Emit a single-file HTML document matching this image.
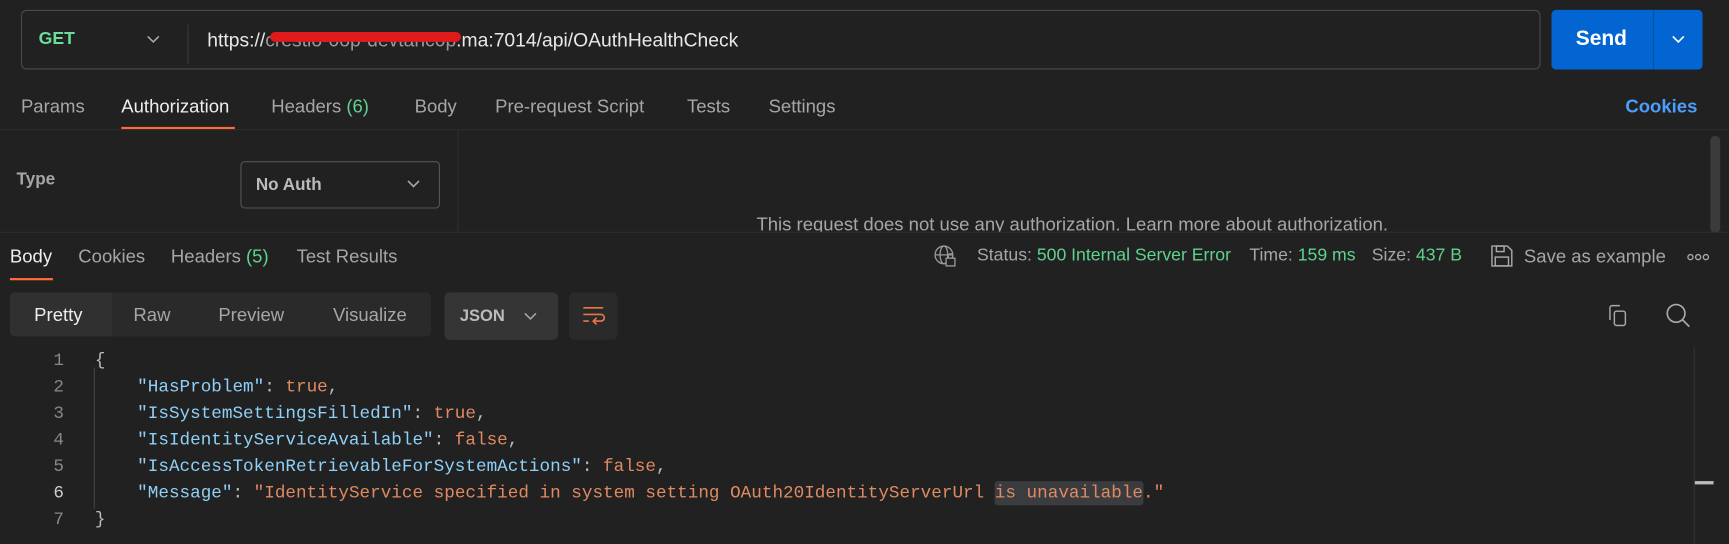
<!DOCTYPE html>
<html><head><meta charset="utf-8"><style>
html,body{margin:0;padding:0;background:#212121;overflow:hidden;width:1729px;height:544px}
#w{position:absolute;left:0;top:0;width:1568px;height:493px;transform:scale(1.1027,1.1034);transform-origin:0 0;font-family:"Liberation Sans",sans-serif;color:#a6a6a6;font-size:16.8px}
.a{position:absolute;white-space:nowrap}
.g{color:#5fd38d}
.code{font-family:"Liberation Mono",monospace;font-size:16px;color:#bbb}
.k{color:#8fd0f8}.v{color:#e08a62}
</style></head><body><div id="w">
<!-- URL bar -->
<div class="a" style="left:19px;top:9px;width:1376px;height:52px;border:1px solid #4a4a4a;border-radius:5px"></div>
<div class="a" style="left:35px;top:27px;color:#6bdd9a;font-weight:bold;font-size:16px">GET</div>
<svg class="a" style="left:132px;top:31px" width="14" height="10"><path d="M2 2l5 5 5-5" stroke="#aaa" stroke-width="1.4" fill="none"/></svg>
<div class="a" style="left:170px;top:22px;width:1px;height:36px;background:#3a3a3a"></div>
<div class="a" style="left:188px;top:26px;color:#e8e8e8;font-size:17.5px">https://<span style="position:relative;color:#9a9a9a">crestio-0op-devtanc0p<span style="position:absolute;left:4px;right:-4px;top:3px;height:9px;background:#e01a1a;border-radius:5px"></span></span>.ma:7014/api/OAuthHealthCheck</div>
<div class="a" style="left:1407px;top:9px;width:137px;height:54px;background:#0265d2;border-radius:4px"></div>
<div class="a" style="left:1499px;top:9px;width:1px;height:54px;background:#0a4f9e"></div>
<div class="a" style="left:1429px;top:25px;color:#fff;font-weight:bold;font-size:19px">Send</div>
<svg class="a" style="left:1515px;top:31px" width="14" height="10"><path d="M2 2l5 5 5-5" stroke="#fff" stroke-width="1.5" fill="none"/></svg>
<!-- tabs -->
<div class="a" style="left:19px;top:87px">Params</div>
<div class="a" style="left:110px;top:87px;color:#eee">Authorization</div>
<div class="a" style="left:110px;top:115px;width:103px;height:2px;background:#ff6c37"></div>
<div class="a" style="left:246px;top:87px">Headers <span class="g">(6)</span></div>
<div class="a" style="left:376px;top:87px">Body</div>
<div class="a" style="left:449px;top:87px">Pre-request Script</div>
<div class="a" style="left:623px;top:87px">Tests</div>
<div class="a" style="left:697px;top:87px">Settings</div>
<div class="a" style="left:1474px;top:87px;color:#4c9efb;font-weight:bold">Cookies</div>
<div class="a" style="left:0;top:117px;width:1568px;height:1px;background:#2e2e2e"></div>
<!-- auth -->
<div class="a" style="left:15px;top:154px;font-weight:bold;font-size:15.5px">Type</div>
<div class="a" style="left:218px;top:146px;width:179px;height:41px;border:1px solid #555;border-radius:4px"></div>
<div class="a" style="left:232px;top:159px;font-size:15.5px;font-weight:bold;color:#bbb">No Auth</div>
<svg class="a" style="left:368px;top:162px" width="14" height="10"><path d="M2 2l5 5 5-5" stroke="#aaa" stroke-width="1.4" fill="none"/></svg>
<div class="a" style="left:415px;top:118px;width:1px;height:92px;background:#2e2e2e"></div>
<div class="a" style="left:0;top:118px;width:1568px;height:92px;overflow:hidden"><div class="a" style="left:686px;top:76px;font-size:16.8px">This request does not use any authorization. Learn more about authorization.</div></div>
<div class="a" style="left:1551px;top:123px;width:9px;height:88px;background:#3b3b3b;border-radius:5px"></div>
<div class="a" style="left:0;top:210px;width:1568px;height:1px;background:#2e2e2e"></div>
<!-- response tabs -->
<div class="a" style="left:9px;top:223px;color:#eee">Body</div>
<div class="a" style="left:9px;top:252px;width:39px;height:2px;background:#ff6c37"></div>
<div class="a" style="left:71px;top:223px">Cookies</div>
<div class="a" style="left:155px;top:223px">Headers <span class="g">(5)</span></div>
<div class="a" style="left:269px;top:223px">Test Results</div>
<svg class="a" style="left:846px;top:221px" width="24" height="24" fill="none" stroke="#999" stroke-width="1.2"><circle cx="10" cy="10" r="8"/><ellipse cx="10" cy="10" rx="3.5" ry="8"/><path d="M2 10h16"/><rect x="12" y="13" width="8" height="7" fill="#212121"/><path d="M14 13v-2a2 2 0 0 1 4 0v2"/></svg>
<div class="a" style="left:886px;top:223px;font-size:16px">Status: <span class="g">500 Internal Server Error</span></div>
<div class="a" style="left:1133px;top:223px;font-size:16px">Time: <span class="g">159 ms</span></div>
<div class="a" style="left:1244px;top:223px;font-size:16px">Size: <span class="g">437 B</span></div>
<svg class="a" style="left:1351px;top:221px" width="22" height="22" fill="none" stroke="#aaa" stroke-width="1.3"><path d="M2 2h14l4 4v14H2z"/><rect x="6" y="2" width="7" height="5"/><rect x="5" y="12" width="12" height="8"/></svg>
<div class="a" style="left:1382px;top:223px">Save as example</div>
<svg class="a" style="left:1530px;top:229px" width="20" height="8" fill="none" stroke="#aaa" stroke-width="1.2"><circle cx="3" cy="4" r="2.3"/><circle cx="10" cy="4" r="2.3"/><circle cx="17" cy="4" r="2.3"/></svg>
<!-- controls -->
<div class="a" style="left:9px;top:265px;width:382px;height:40px;background:#2a2a2a;border-radius:5px"></div>
<div class="a" style="left:9px;top:265px;width:93px;height:40px;background:#303030;border-radius:5px 0 0 5px"></div>
<div class="a" style="left:31px;top:276px;color:#eee">Pretty</div>
<div class="a" style="left:121px;top:276px">Raw</div>
<div class="a" style="left:198px;top:276px">Preview</div>
<div class="a" style="left:302px;top:276px">Visualize</div>
<div class="a" style="left:403px;top:265px;width:103px;height:43px;background:#353535;border-radius:5px"></div>
<div class="a" style="left:417px;top:278px;font-weight:bold;font-size:15px;color:#bbb">JSON</div>
<svg class="a" style="left:474px;top:282px" width="14" height="10"><path d="M2 2l5 5 5-5" stroke="#aaa" stroke-width="1.4" fill="none"/></svg>
<div class="a" style="left:516px;top:265px;width:44px;height:43px;background:#2a2a2a;border-radius:5px"></div>
<svg class="a" style="left:527px;top:276px" width="22" height="20" fill="none" stroke="#e8774a" stroke-width="1.5"><path d="M2 3h18M2 9h16a3 3 0 0 1 0 6h-6M2 15h5"/><path d="M14 12l-3 3 3 3"/></svg>
<svg class="a" style="left:1456px;top:275px" width="22" height="22" fill="none" stroke="#aaa" stroke-width="1.3"><path d="M4 15V4a2 2 0 0 1 2-2h7"/><rect x="8" y="7" width="10" height="13" rx="2"/></svg>
<svg class="a" style="left:1510px;top:274px" width="24" height="24" fill="none" stroke="#aaa" stroke-width="1.5"><circle cx="10" cy="10" r="8"/><path d="M16 16l6 6"/></svg>
<!-- code -->
<div class="a" style="left:85px;top:333px;width:1px;height:128px;background:#444"></div>
<div class="a code" style="left:40px;top:315px;line-height:24px;color:#888;text-align:right;width:18px">1<br>2<br>3<br>4<br>5<br><span style="color:#ccc">6</span><br>7</div>
<div class="a code" style="left:86px;top:315px;line-height:24px">{<br>
&nbsp;&nbsp;&nbsp;&nbsp;<span class="k">"HasProblem"</span>: <span class="v">true</span>,<br>
&nbsp;&nbsp;&nbsp;&nbsp;<span class="k">"IsSystemSettingsFilledIn"</span>: <span class="v">true</span>,<br>
&nbsp;&nbsp;&nbsp;&nbsp;<span class="k">"IsIdentityServiceAvailable"</span>: <span class="v">false</span>,<br>
&nbsp;&nbsp;&nbsp;&nbsp;<span class="k">"IsAccessTokenRetrievableForSystemActions"</span>: <span class="v">false</span>,<br>
&nbsp;&nbsp;&nbsp;&nbsp;<span class="k">"Message"</span>: <span class="v">"IdentityService specified in system setting OAuth20IdentityServerUrl <span style="background:#3a3c40;border-radius:3px;padding:2px 0">is unavailable</span>."</span><br>
}</div>
<div class="a" style="left:1536px;top:315px;width:1px;height:178px;background:#333"></div>
<div class="a" style="left:1537px;top:436px;width:17px;height:3px;background:#bbb"></div>
</div></body></html>
